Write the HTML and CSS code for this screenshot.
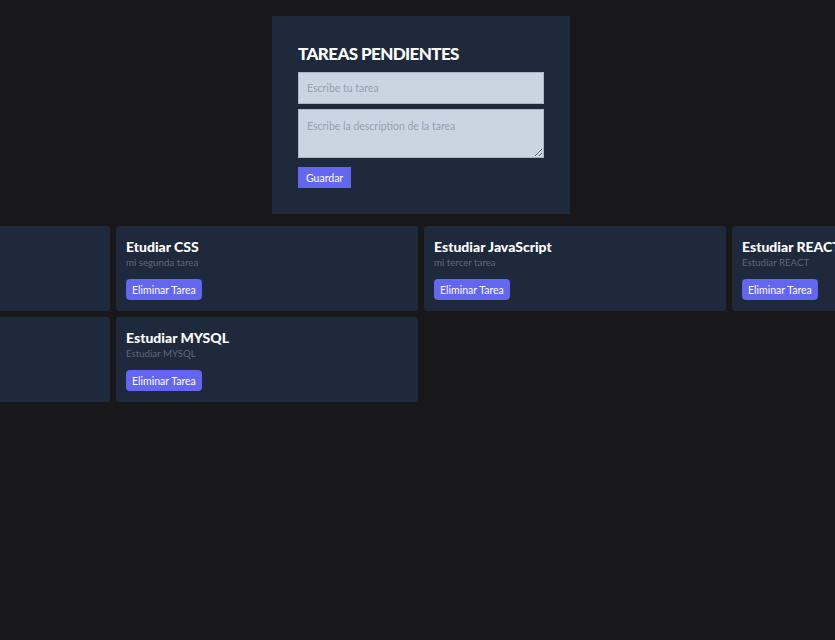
FILE: index.html
```html
<!DOCTYPE html>
<html lang="es">
<head>
<meta charset="utf-8">
<title>Tareas</title>
<link rel="stylesheet" href="styles.css">
</head>
<body>
<div class="page">
  <form class="form-card">
    <h1 class="form-title">TAREAS PENDIENTES</h1>
    <input class="field" type="text" placeholder="Escribe tu tarea">
    <textarea class="field area" placeholder="Escribe la description de la tarea"></textarea>
    <button class="btn-save" type="button">Guardar</button>
  </form>
  <div class="grid">
    <div class="card">
      <h2 class="card-title">Estudiar HTML</h2>
      <p class="card-desc">mi primera tarea</p>
      <button class="btn-del" type="button">Eliminar Tarea</button>
    </div>
    <div class="card">
      <h2 class="card-title">Etudiar CSS</h2>
      <p class="card-desc">mi segunda tarea</p>
      <button class="btn-del" type="button">Eliminar Tarea</button>
    </div>
    <div class="card">
      <h2 class="card-title">Estudiar JavaScript</h2>
      <p class="card-desc">mi tercer tarea</p>
      <button class="btn-del" type="button">Eliminar Tarea</button>
    </div>
    <div class="card">
      <h2 class="card-title">Estudiar REACT</h2>
      <p class="card-desc">Estudiar REACT</p>
      <button class="btn-del" type="button">Eliminar Tarea</button>
    </div>
    <div class="card">
      <h2 class="card-title">Estudiar NODE</h2>
      <p class="card-desc">Estudiar NODE</p>
      <button class="btn-del" type="button">Eliminar Tarea</button>
    </div>
    <div class="card">
      <h2 class="card-title">Estudiar MYSQL</h2>
      <p class="card-desc">Estudiar MYSQL</p>
      <button class="btn-del" type="button">Eliminar Tarea</button>
    </div>
  </div>
</div>
</body>
</html>
```
FILE: styles.css
```css
html, body {
  margin: 0;
  padding: 0;
  background: #18181b;
  overflow: hidden;
}
body {
  font-family: Lato, "Open Sans", sans-serif;
  color: #ffffff;
  height: 640px;
}
.page {
  display: flex;
  flex-direction: column;
  align-items: center;
  padding: 16px 0 0 7px;
}
.form-card {
  width: 246px;
  padding: 26px;
  background: #1e293b;
  display: flex;
  flex-direction: column;
}
.form-title {
  margin: 0 0 6px 0;
  font-size: 17px;
  line-height: 24px;
  font-weight: 900;
  letter-spacing: -0.6px;
  color: #ffffff;
}
.field {
  box-sizing: border-box;
  width: 246px;
  height: 32px;
  margin: 0;
  padding: 0 8px;
  border: 1px solid #aab4c2;
  background: #cbd5e1;
  font-family: inherit;
  font-size: 10.5px;
  color: #1e293b;
  outline: none;
}
.field::placeholder {
  color: #94a0b2;
}
.area {
  height: 49px;
  margin-top: 5px;
  padding: 10px 8px 8px;
  resize: vertical;
  display: block;
}
.btn-save {
  align-self: flex-start;
  margin-top: 9px;
  height: 21px;
  padding: 0 8px;
  border: none;
  background: #6366f1;
  color: #ffffff;
  font-family: inherit;
  font-size: 10.5px;
}
.grid {
  margin-top: 12px;
  display: grid;
  grid-template-columns: repeat(4, 302px);
  gap: 6px;
  flex-shrink: 0;
}
.card {
  box-sizing: border-box;
  height: 85px;
  padding: 10px;
  background: #1e293b;
  border-radius: 3px;
  display: flex;
  flex-direction: column;
  align-items: flex-start;
}
.card-title {
  margin: 0;
  font-size: 14px;
  line-height: 21px;
  font-weight: 900;
  color: #ffffff;
  white-space: nowrap;
}
.card-desc {
  margin: 0;
  font-size: 9.7px;
  line-height: 11px;
  color: #5d6878;
}
.btn-del {
  margin-top: 11px;
  height: 21px;
  padding: 0 6px;
  border: none;
  border-radius: 4px;
  background: #6366f1;
  color: #ffffff;
  font-family: inherit;
  font-size: 10.5px;
}
```
